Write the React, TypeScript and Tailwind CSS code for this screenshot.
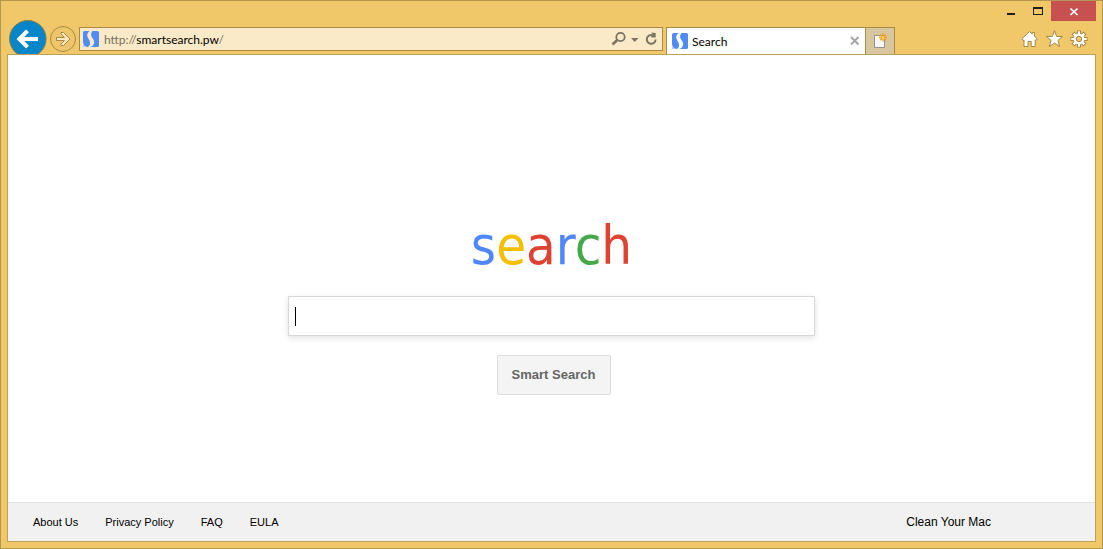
const logoLetters = [
  { ch: "s", color: "text-[#4d87fb]" },
  { ch: "e", color: "text-[#f4bf00]" },
  { ch: "a", color: "text-[#df4230]" },
  { ch: "r", color: "text-[#4d87fb]" },
  { ch: "c", color: "text-[#45a94a]" },
  { ch: "h", color: "text-[#df4230]" },
];

const footerLinks = ["About Us", "Privacy Policy", "FAQ", "EULA"];

function SiteIcon() {
  return (
    <svg width="16" height="16" viewBox="0 0 16 16" className="shrink-0" aria-hidden="true">
      <path d="M1.500 0H6.500C4.300 1.800 3.600 4 4.800 6.500C5.700 8.400 7.600 10.600 7 13C6.700 14.400 6 15.400 4.800 16C2 15.800 0 13.600 0 10.500V1.500Q0 0 1.500 0Z" fill="#4f8df5" />
      <path d="M9.500 0H14.500Q16 0 16 1.500V14.500Q16 16 14.500 16H7.500C10.300 14.800 11.600 12.500 11 10C10.500 7.800 8.700 6.600 8.200 4.400C7.900 2.700 8.500 1.200 9.500 0Z" fill="#4f8df5" />
      <path d="M0 12.500V16H3.500C1.800 15.400 0.600 14.200 0 12.500Z" fill="#a9c7fb" />
    </svg>
  );
}

function WindowButtons() {
  return (
    <div className="flex h-[19px] justify-end">
      <button type="button" aria-label="Minimize" className="h-5 w-7">
        <svg width="28" height="20" viewBox="0 0 28 20" aria-hidden="true">
          <rect x="12" y="12" width="8" height="2" fill="#1f1f1f" />
        </svg>
      </button>
      <button type="button" aria-label="Maximize" className="h-5 w-7">
        <svg width="28" height="20" viewBox="0 0 28 20" aria-hidden="true">
          <path d="M10 6H20V14H10Z M11 8V13H19V8Z" fill="#1f1f1f" fillRule="evenodd" />
        </svg>
      </button>
      <button type="button" aria-label="Close" className="h-5 w-[45px] bg-[#c75050]">
        <svg width="45" height="20" viewBox="0 0 45 20" aria-hidden="true">
          <path d="M19.500 7.500L26.500 14M26.500 7.500L19.500 14" stroke="#fff" strokeWidth="1.700" />
        </svg>
      </button>
    </div>
  );
}

function NavButtons() {
  return (
    <div className="flex w-[72px] shrink-0">
      <button type="button" aria-label="Back" className="h-[34px] w-10">
        <svg width="40" height="34" viewBox="0 0 40 34" aria-hidden="true">
          <circle cx="20.800" cy="18.800" r="18.300" fill="#0685c8" stroke="#8f7a45" />
          <path d="M12 19H31M20.500 10.800L12.300 19L20.500 27.200" fill="none" stroke="#fff" strokeWidth="4" />
        </svg>
      </button>
      <button type="button" aria-label="Forward" disabled className="h-[34px] w-8">
        <svg width="32" height="34" viewBox="0 0 32 34" aria-hidden="true">
          <circle cx="16" cy="19" r="12.500" fill="#efc56a" stroke="#a98a48" />
          <path
            d="M9.500 17.500H17.500L14 14V12.500H16.500L23 19L16.500 25.500H14V24L17.500 20.500H9.500Z"
            fill="#fbe9c0"
            stroke="#a98a48"
          />
        </svg>
      </button>
    </div>
  );
}

function AddressBar() {
  return (
    <div className="mt-[7px] flex h-6 min-w-0 flex-1 items-center border border-[#ab8b44] bg-[#faeac8] pr-px pl-[3px]">
      <SiteIcon />
      <a href="#" className="min-w-0 flex-1 truncate pt-px pl-[5px] text-xs text-black">
        <span className="text-[#77705f]">http://</span>smartsearch.pw<span className="text-[#77705f]">/</span>
      </a>
      <button type="button" aria-label="Search" className="h-5 w-5">
        <svg width="20" height="20" viewBox="0 0 20 20" aria-hidden="true">
          <circle cx="11.500" cy="8" r="4.200" fill="none" stroke="#7b7464" strokeWidth="1.800" />
          <path d="M8.300 11L3.500 15.500" stroke="#7b7464" strokeWidth="2.600" />
        </svg>
      </button>
      <button type="button" aria-label="Show address history" className="h-5 w-3">
        <svg width="12" height="20" viewBox="0 0 12 20" aria-hidden="true">
          <path d="M2 9H9.500L5.700 13Z" fill="#7b7464" />
        </svg>
      </button>
      <button type="button" aria-label="Refresh" className="h-5 w-5">
        <svg width="20" height="20" viewBox="0 0 20 20" aria-hidden="true">
          <path d="M11.800 6.300A4.400 4.400 0 1 0 14.600 10.500" fill="none" stroke="#7b7464" strokeWidth="2" />
          <path d="M10.200 3.500L14.700 3.900V8.500H10.200V7.500L12 5.800Z" fill="#7b7464" />
        </svg>
      </button>
    </div>
  );
}

function Tabs() {
  return (
    <div className="mt-[7px] ml-[3px] flex shrink-0">
      <div className="flex w-[200px] items-center border border-b-0 border-[#ab8b44] bg-white pr-1 pl-[5px]">
        <SiteIcon />
        <span className="flex-1 pt-px pl-1 text-xs text-black">Search</span>
        <button type="button" aria-label="Close tab">
          <svg width="12" height="12" viewBox="0 0 12 12" aria-hidden="true">
            <path d="M2 2L9.500 9.500M9.500 2L2 9.500" stroke="#a5a5a5" strokeWidth="2" />
          </svg>
        </button>
      </div>
      <button
        type="button"
        aria-label="New tab"
        className="flex w-[29px] justify-center border border-b-0 border-l-0 border-[#ab8b44] bg-[#d8c79e] pt-[5px]"
      >
        <svg width="16" height="18" viewBox="0 0 16 18" aria-hidden="true">
          <path d="M2.500 2.500H12.500V14.500H2.500Z" fill="#f7f7f7" stroke="#93928c" />
          <path d="M11 0.500V8.500M7 4.500H15M8.200 1.700L13.800 7.300M13.800 1.700L8.200 7.300" stroke="#f39c12" strokeWidth="1.300" />
          <circle cx="11" cy="4.500" r="1.500" fill="#ffd75e" />
        </svg>
      </button>
    </div>
  );
}

function CommandBar() {
  const teeth = [0, 45, 90, 135, 180, 225, 270, 315];
  return (
    <div className="flex w-[201px] shrink-0 items-center justify-end gap-[7px] pt-[3px] pr-2">
      <button type="button" aria-label="Home">
        <svg width="18" height="18" viewBox="0 0 18 18" aria-hidden="true">
          <path
            d="M9.500 1.500L12.200 4.100V2.500H14.500V6.300L17.300 9L16 10.500L15.200 9.900V16.500H11.200V11.500H8V16.500H4V9.900L3.200 10.500L1.800 9Z"
            fill="#fff"
            stroke="#a28748"
          />
        </svg>
      </button>
      <button type="button" aria-label="Favorites">
        <svg width="18" height="18" viewBox="0 0 18 18" aria-hidden="true">
          <path
            d="M9.500 0.700L11.700 6.500H17.500L12.900 10.400L14.700 16.600L9.500 13L4.300 16.600L6.100 10.400L1.500 6.500H7.300Z"
            fill="#fff"
            stroke="#a28748"
          />
        </svg>
      </button>
      <button type="button" aria-label="Tools">
        <svg width="18" height="18" viewBox="0 0 18 18" aria-hidden="true">
          <g fill="#fff" stroke="#a28748">
            {teeth.map((angle) => (
              <rect key={angle} x="7.500" y="1" width="3" height="5" transform={`rotate(${angle} 9 9)`} />
            ))}
          </g>
          <circle cx="9" cy="9" r="5.700" fill="#fff" stroke="#a28748" strokeWidth="0.600" />
          <g fill="#fff">
            {teeth.map((angle) => (
              <rect key={angle} x="8" y="1.500" width="2" height="4" transform={`rotate(${angle} 9 9)`} />
            ))}
          </g>
          <circle cx="9" cy="9" r="2.700" fill="#f0c869" stroke="#a28748" />
        </svg>
      </button>
    </div>
  );
}

function SearchPage() {
  return (
    <div className="flex flex-1 flex-col border border-[#bd9f58] bg-white font-['Liberation_Sans',Arial,sans-serif]">
      <main className="flex flex-1 flex-col items-center px-4 pt-[161px] pb-8">
        <h1 className="font-['DejaVu_Sans_Condensed','DejaVu_Sans',sans-serif] text-[54px] leading-[60px]">
          {logoLetters.map((l, i) => (
            <span key={i} className={l.color}>
              {l.ch}
            </span>
          ))}
        </h1>
        <form className="flex w-full flex-col items-center pt-5" onSubmit={(e) => e.preventDefault()}>
          <div className="flex h-10 w-full max-w-[527px] items-center border border-[#d9d9d9] bg-white px-1.5 shadow-[0_2px_6px_rgba(0,0,0,0.12)]">
            <span className="h-[19px] w-px bg-black" />
            <input type="text" aria-label="Search" className="h-full min-w-0 flex-1 text-base outline-none" />
          </div>
          <button
            type="submit"
            className="mt-[19px] ml-1 h-10 w-[114px] rounded-xs border border-[#dcdcdc] bg-[#f4f4f4] text-[13px] font-bold text-[#666]"
          >
            Smart Search
          </button>
        </form>
      </main>
      <footer className="flex h-[39px] items-center justify-between border-t border-[#e2e2e2] bg-[#f1f1f1] pr-[104px] pl-[25px] text-black">
        <nav className="flex gap-[27px] pt-px text-[11px]">
          {footerLinks.map((label) => (
            <a key={label} href="#">
              {label}
            </a>
          ))}
        </nav>
        <a href="#" className="text-xs">
          Clean Your Mac
        </a>
      </footer>
    </div>
  );
}

export default function App() {
  return (
    <div className="flex min-h-screen flex-col border border-[#b39650] bg-[#f0c869] px-1.5 pb-1.5 font-[Lato,'Open_Sans',sans-serif]">
      <WindowButtons />
      <div className="flex h-[34px]">
        <NavButtons />
        <AddressBar />
        <Tabs />
        <CommandBar />
      </div>
      <SearchPage />
    </div>
  );
}
